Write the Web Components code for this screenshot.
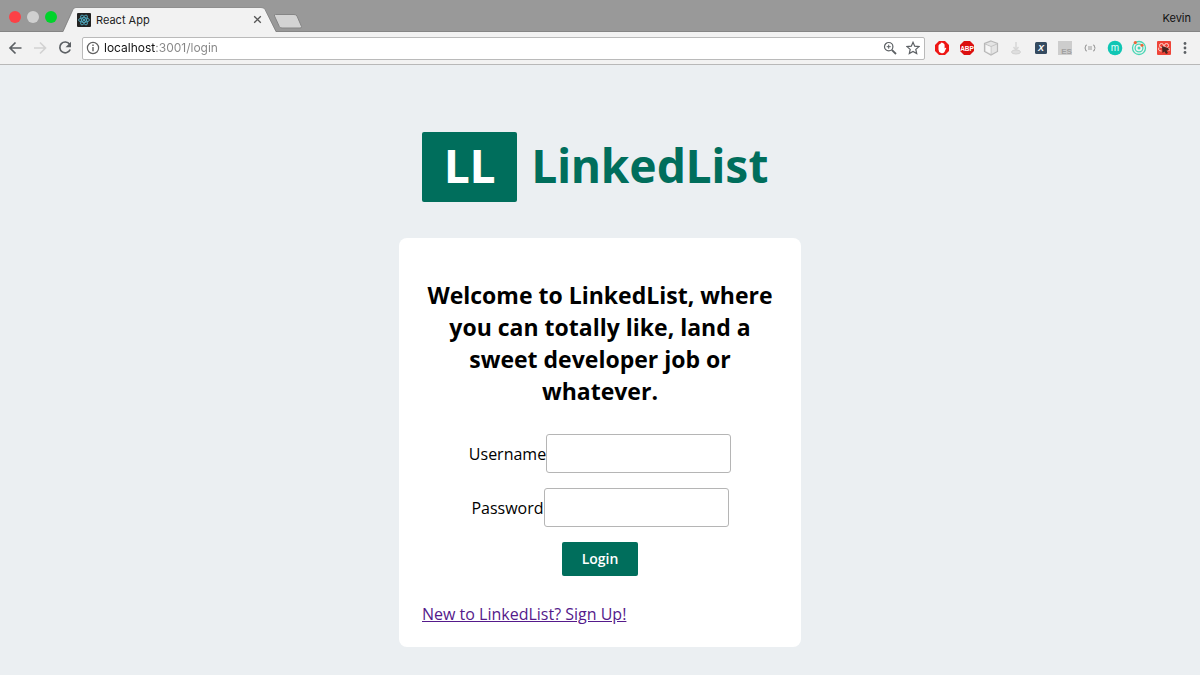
<!DOCTYPE html>
<html lang="en">
<head>
<meta charset="utf-8">
<title>React App</title>
<style>
html, body { height: 100%; margin: 0; }
body { background: #ebeff2; font-family: "Open Sans", "Noto Sans", sans-serif; color: #000; }
</style>
</head>
<body>
<browser-window>
  <tab-strip slot="tabs" user="Kevin"><browser-tab>React App</browser-tab></tab-strip>
  <tool-bar slot="toolbar"></tool-bar>
  <login-page>
    <brand-logo mark="LL">LinkedList</brand-logo>
    <login-card>
      <span slot="title">Welcome to LinkedList, where you can totally like, land a sweet developer job or whatever.</span>
      <form-field name="username">Username</form-field>
      <form-field name="password" type="password">Password</form-field>
      <submit-button>Login</submit-button>
      <sign-link slot="footer" href="#signup">New to LinkedList? Sign Up!</sign-link>
    </login-card>
  </login-page>
</browser-window>
<script>
const define = (name, html, setup) => {
  const template = document.createElement('template');
  template.innerHTML = html;
  customElements.define(name, class extends HTMLElement {
    constructor() {
      super();
      this.attachShadow({ mode: 'open' }).append(template.content.cloneNode(true));
    }
    connectedCallback() { if (setup) setup(this, this.shadowRoot); }
  });
};

define('browser-window', `
<style>
:host { display: flex; flex-direction: column; min-height: 100%; }
main { flex: 1; display: flex; flex-direction: column; }
</style>
<slot name="tabs"></slot><slot name="toolbar"></slot><main><slot></slot></main>`);

define('tab-strip', `
<style>
:host { display: flex; align-items: flex-end; height: 32px; padding: 0 9px 0 8px; background: #999; box-sizing: border-box;
  box-shadow: inset 0 -1px #858585; }
.lights { display: flex; gap: 6px; padding: 0 6px 9px 1px; }
button { border: 0; padding: 0; background: none; display: block; }
.lights button { width: 12px; height: 12px; border-radius: 50%; }
.close { background: #fc4146; } .min { background: #d0d0d0; } .max { background: #00d32b; }
.new { margin-bottom: 3px; margin-left: -4px; }
svg { display: block; }
.user { margin-left: auto; align-self: center; font: 11px/16px Inter, sans-serif; color: #111; padding-top: 3px; }
</style>
<div class="lights"><button class="close" aria-label="Close"></button><button class="min" aria-label="Minimize"></button><button class="max" aria-label="Zoom"></button></div>
<slot></slot>
<button class="new" aria-label="New tab"><svg width="30" height="15" viewBox="0 0 30 15"><path d="M2.500 .5H21Q23 .5 24 2L28.500 12.500Q29 14 27 14H9Q7 14 6.300 12.500L1.500 2Q1 .5 2.500 .5Z" fill="#d3d3d3" stroke="#858585"/></svg></button>
<span class="user"></span>`, (host, root) => {
  root.querySelector('.user').textContent = host.getAttribute('user');
});

define('browser-tab', `
<style>
:host { display: flex; position: relative; align-items: center; width: 214px; height: 25px; padding: 0 15px 0 14px; box-sizing: border-box;
  font: 11px Inter, sans-serif; color: #222; }
svg { display: block; }
.shape { position: absolute; inset: 0; }
.icon, span, button { position: relative; }
span { margin: 0 auto 0 5px; }
button { border: 0; padding: 0; background: none; }
</style>
<svg class="shape" width="214" height="25" viewBox="0 0 214 25"><path d="M0 25L10 2.500Q11 .5 13 .5H198Q201 .5 202 2.500L213 25Z" fill="#f2f2f2"/><path d="M0 24.500L10 2.500Q11 .5 13 .5H198Q201 .5 202 2.500L213 24.500" fill="none" stroke="#777" stroke-opacity=".7"/></svg>
<svg class="icon" width="14" height="14" viewBox="0 0 14 14"><rect width="14" height="14" rx="1" fill="#222"/><g fill="none" stroke="#55bdd6" stroke-width=".8"><ellipse cx="7" cy="7" rx="5.500" ry="2.200"/><ellipse cx="7" cy="7" rx="5.500" ry="2.200" transform="rotate(60 7 7)"/><ellipse cx="7" cy="7" rx="5.500" ry="2.200" transform="rotate(120 7 7)"/></g><circle cx="7" cy="7" r="1.100" fill="#55bdd6"/></svg>
<span><slot></slot></span>
<button aria-label="Close tab"><svg width="9" height="9" viewBox="0 0 9 9"><path d="M1.200 1.200L7.800 7.800M7.800 1.200L1.200 7.800" stroke="#555" stroke-width="1.300"/></svg></button>`);

define('tool-bar', `
<style>
:host { display: flex; align-items: center; height: 33px; padding: 0 10px 0 7px; box-sizing: border-box; background: #f2f2f2;
  border-bottom: 1px solid #b8b8b8; }
button { border: 0; padding: 0; background: none; display: block; }
svg { display: block; }
.nav { display: flex; gap: 9px; margin-right: 9px; }
.address { flex: 1; display: flex; align-items: center; height: 23px; box-sizing: border-box; padding: 0 4px 0 3px;
  background: #fff; border: 1px solid #bababa; border-radius: 2px; }
input { flex: 1; min-width: 0; border: 0; padding: 0; margin: 0 4px; outline: 0; height: 20px; font: 12px/20px Inter, sans-serif; color: #222;
  background: linear-gradient(90deg, #111 51px, #858585 51px); -webkit-background-clip: text; background-clip: text; -webkit-text-fill-color: transparent; }
.star { margin-left: 9px; }
.ext { display: flex; justify-content: space-between; width: 238px; margin: 0 8px 0 9px; }
text { font-family: "Liberation Sans", sans-serif; font-weight: bold; text-anchor: middle; }
</style>
<div class="nav">
<button aria-label="Back"><svg width="16" height="16" viewBox="0 0 16 16"><path d="M14.500 8H3M8.500 2.500L3 8L8.500 13.500" fill="none" stroke="#5c6064" stroke-width="1.700"/></svg></button>
<button aria-label="Forward"><svg width="16" height="16" viewBox="0 0 16 16"><path d="M2 8H13.500M8 2.500L13.500 8L8 13.500" fill="none" stroke="#d2d2d2" stroke-width="1.700"/></svg></button>
<button aria-label="Reload"><svg width="16" height="16" viewBox="0 0 16 16"><path d="M12.600 4.200A5.400 5.400 0 1 0 13.200 9.500" fill="none" stroke="#5c6064" stroke-width="1.700"/><path d="M14 1.800V7.300H8.500Z" fill="#5c6064"/></svg></button>
</div>
<div class="address">
<svg width="14" height="14" viewBox="0 0 14 14"><circle cx="7" cy="7" r="5.600" fill="none" stroke="#606060" stroke-width="1.200"/><path d="M7 6V10.300M7 3.500V5" stroke="#606060" stroke-width="1.400"/></svg>
<input type="text" aria-label="Address" value="localhost:3001/login">
<button aria-label="Zoom"><svg width="14" height="14" viewBox="0 0 14 14"><circle cx="5.700" cy="5.700" r="4.200" fill="none" stroke="#5c6064" stroke-width="1.200"/><path d="M8.800 8.800L13 13" stroke="#5c6064" stroke-width="1.800"/><path d="M3.700 5.700H7.700M5.700 3.700V7.700" stroke="#5c6064"/></svg></button>
<button class="star" aria-label="Bookmark"><svg width="14" height="14" viewBox="0 0 14 14"><path d="M7 1.300L8.700 5.200L13 5.600L9.800 8.400L10.700 12.600L7 10.400L3.300 12.600L4.200 8.400L1 5.600L5.300 5.200Z" fill="none" stroke="#5c6064" stroke-width="1.200"/></svg></button>
</div>
<div class="ext">
<button aria-label="AdBlock"><svg width="16" height="16" viewBox="0 0 16 16"><path d="M5 1H11L15 5V11L11 15H5L1 11V5Z" fill="#ee1715"/><path d="M5.300 4.500Q6 3.500 6.700 4V3Q7.500 2 8.200 3Q9 2.500 9.500 3.500Q10.500 3.500 10.600 5V8.500Q11.500 7.500 12.300 8L10.500 12Q9 14 7 13Q4.500 12.300 4.500 9.500V5.500Z" fill="#fff"/></svg></button>
<button aria-label="Adblock Plus"><svg width="16" height="16" viewBox="0 0 16 16"><path d="M5 1H11L15 5V11L11 15H5L1 11V5Z" fill="#dc1010"/><text x="8" y="10.500" font-size="6.500" fill="#fff">ABP</text></svg></button>
<button aria-label="Cube"><svg width="16" height="16" viewBox="0 0 16 16"><path d="M8 1L14.500 3.500V11.500L8 15L1.500 11.500V3.500Z" fill="#e4e4e4" stroke="#b8b8b8" stroke-width="1.200"/><path d="M2 4L8 6.500L14 4M8 6.500V14.500" fill="none" stroke="#c4c4c4"/><path d="M3 5L7.500 7V13.500L3 11Z" fill="#f6f6f6"/></svg></button>
<button aria-label="Download"><svg width="16" height="16" viewBox="0 0 16 16"><path d="M8 2V9M5.500 7L8 10L10.500 7" fill="none" stroke="#d8d8d8" stroke-width="1.500"/><ellipse cx="8" cy="12" rx="4.500" ry="2" fill="#dedede" stroke="#d2d2d2"/></svg></button>
<button aria-label="X tool"><svg width="16" height="16" viewBox="0 0 16 16"><rect x="2" y="2" width="12" height="12" rx="1.500" fill="#354b60"/><text x="8" y="11.300" font-size="9" fill="#fff" font-style="italic">X</text></svg></button>
<button aria-label="ES"><svg width="16" height="16" viewBox="0 0 16 16"><path d="M1 1H15V15H1Z" fill="#cdcdcd"/><text x="9.500" y="13.500" font-size="8" fill="#a0a0a0">ES</text></svg></button>
<button aria-label="Braces"><svg width="16" height="16" viewBox="0 0 16 16"><path d="M5 5Q3.500 5 3.500 6.500Q3.500 8 2.500 8Q3.500 8 3.500 9.500Q3.500 11 5 11M11 5Q12.500 5 12.500 6.500Q12.500 8 13.500 8Q12.500 8 12.500 9.500Q12.500 11 11 11M6 7H10M6 9H10" fill="none" stroke="#9b9b9b" stroke-width="1.100"/></svg></button>
<button aria-label="Momentum"><svg width="16" height="16" viewBox="0 0 16 16"><circle cx="8" cy="8" r="7.300" fill="#10c6b4"/><text x="8" y="11" font-size="10" style="font-weight:normal" fill="#e4fffb">m</text></svg></button>
<button aria-label="Radar"><svg width="16" height="16" viewBox="0 0 16 16"><g fill="none" stroke="#49d6b4" stroke-width="1.300"><circle cx="8" cy="8" r="6.500"/><circle cx="8" cy="8" r="3.900"/></g><circle cx="8" cy="8" r="1.500" fill="#49d6b4"/><circle cx="4.300" cy="2.600" r="1.600" fill="#ee6638"/><circle cx="11" cy="5.300" r="1.500" fill="#ee6638"/></svg></button>
<button aria-label="Bug tracker"><svg width="16" height="16" viewBox="0 0 16 16"><rect x="1" y="1" width="14" height="14" rx="1" fill="#ef4438"/><g fill="none" stroke="#ffd5cd"><circle cx="5.500" cy="5.500" r="2"/><circle cx="10.500" cy="5.500" r="2"/><path d="M3 7.500Q1.500 11 5.500 11M13 8V11"/></g><path d="M6 6L12 8L13 10L10.500 10.500L12 13L10 14L8.500 11.500L6.500 13Z" fill="#49251f"/></svg></button>
</div>
<button aria-label="Menu"><svg width="10" height="16" viewBox="0 0 10 16"><g fill="#5c6064"><circle cx="5" cy="3.500" r="1.400"/><circle cx="5" cy="8" r="1.400"/><circle cx="5" cy="12.500" r="1.400"/></g></svg></button>`);

define('login-page', `
<style>
:host { display: flex; flex-direction: column; align-items: center; padding: 67px 24px 28px; }
</style><slot></slot>`);

define('brand-logo', `
<style>
:host { display: flex; gap: 14px; width: 100%; max-width: 402px; box-sizing: border-box; padding: 0 23px; margin-bottom: 36px;
  color: #006e5c; font: 700 46px/66px "Noto Sans", sans-serif; }
.mark { padding: 0 22px 4px; border-radius: 2px; background: #006e5c; color: #fff; }
</style><span class="mark"></span><span><slot></slot></span>`, (host, root) => {
  root.querySelector('.mark').textContent = host.getAttribute('mark');
});

define('login-card', `
<style>
:host { display: block; width: 100%; max-width: 402px; box-sizing: border-box; padding: 41px 23px 21px; border-radius: 8px; background: #fff;
  font-size: 16px; line-height: 24px; }
h2 { margin: 0 0 27px; font-size: 23px; line-height: 32px; text-align: center; }
form { display: flex; flex-direction: column; align-items: center; gap: 15px; margin-bottom: 26px; }
</style>
<h2><slot name="title"></slot></h2>
<form><slot></slot></form>
<slot name="footer"></slot>`);

define('form-field', `
<style>
:host { display: flex; align-items: center; }
input { width: 185px; height: 39px; box-sizing: border-box; padding: 8px; border: 1px solid #b5b5b5; border-radius: 3px; background: #fff; font: inherit; }
</style><label for="field"><slot></slot></label><input id="field">`, (host, root) => {
  const input = root.querySelector('input');
  input.type = host.getAttribute('type') || 'text';
  input.name = host.getAttribute('name');
});

define('submit-button', `
<style>
:host { display: block; }
button { display: block; border: 0; border-radius: 2px; padding: 7px 20px; background: #006e5c; color: #fff; font: 600 14px/20px "Open Sans", sans-serif; }
</style><button type="submit"><slot></slot></button>`);

define('sign-link', `
<style>
:host { display: block; }
a { color: #551a8b; }
</style><a><slot></slot></a>`, (host, root) => {
  root.querySelector('a').href = host.getAttribute('href');
});
</script>
</body>
</html>
